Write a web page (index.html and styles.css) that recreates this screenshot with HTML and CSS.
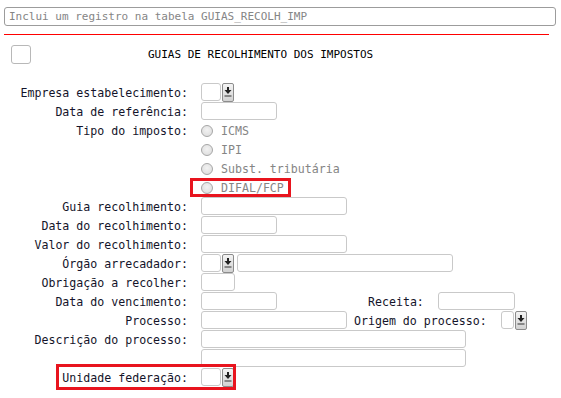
FILE: index.html
```html
<!DOCTYPE html>
<html>
<head>
<meta charset="utf-8">
<link rel="stylesheet" href="styles.css">
</head>
<body>
<div class="page">
  <div class="cmd"><span class="cmd-text">Inclui um registro na tabela GUIAS_RECOLH_IMP</span></div>
  <div class="rule"></div>
  <div class="head">
    <span class="check"></span>
    <span class="title">GUIAS DE RECOLHIMENTO DOS IMPOSTOS</span>
  </div>
  <div class="form">
    <div class="lbl">Empresa estabelecimento:</div>
    <div class="fld"><span class="inp w20"></span><span class="btn"><svg width="10" height="17" viewBox="0 0 10 17"><rect x="4" y="3" width="2" height="3" fill="#222"/><path d="M1.5 6 H8.5 L5 10 Z" fill="#222"/><rect x="1.5" y="11.5" width="7" height="1" fill="#333"/></svg></span></div>

    <div class="lbl">Data de referência:</div>
    <div class="fld"><span class="inp w76"></span></div>

    <div class="lbl">Tipo do imposto:</div>
    <div class="fld"><span class="opt"><span class="radio"></span><span class="opt-text">ICMS</span></span></div>

    <div class="lbl"></div>
    <div class="fld"><span class="opt"><span class="radio"></span><span class="opt-text">IPI</span></span></div>

    <div class="lbl"></div>
    <div class="fld"><span class="opt"><span class="radio"></span><span class="opt-text">Subst. tributária</span></span></div>

    <div class="lbl"></div>
    <div class="fld"><span class="opt hl"><span class="radio"></span><span class="opt-text">DIFAL/FCP</span></span></div>

    <div class="lbl">Guia recolhimento:</div>
    <div class="fld"><span class="inp w146"></span></div>

    <div class="lbl">Data do recolhimento:</div>
    <div class="fld"><span class="inp w76"></span></div>

    <div class="lbl">Valor do recolhimento:</div>
    <div class="fld"><span class="inp w146"></span></div>

    <div class="lbl">Órgão arrecadador:</div>
    <div class="fld"><span class="inp w20"></span><span class="btn"><svg width="10" height="17" viewBox="0 0 10 17"><rect x="4" y="3" width="2" height="3" fill="#222"/><path d="M1.5 6 H8.5 L5 10 Z" fill="#222"/><rect x="1.5" y="11.5" width="7" height="1" fill="#333"/></svg></span><span class="inp w216 ml3"></span></div>

    <div class="lbl">Obrigação a recolher:</div>
    <div class="fld"><span class="inp w34"></span></div>

    <div class="lbl">Data do vencimento:</div>
    <div class="fld"><span class="inp w76"></span><span class="lbl2 receita">Receita:</span><span class="inp w77"></span></div>

    <div class="lbl">Processo:</div>
    <div class="fld"><span class="inp w146"></span><span class="lbl2 origem">Origem do processo:</span><span class="inp w13"></span><span class="btn"><svg width="10" height="17" viewBox="0 0 10 17"><rect x="4" y="3" width="2" height="3" fill="#222"/><path d="M1.5 6 H8.5 L5 10 Z" fill="#222"/><rect x="1.5" y="11.5" width="7" height="1" fill="#333"/></svg></span></div>

    <div class="lbl">Descrição do processo:</div>
    <div class="fld"><span class="inp w265"></span></div>

    <div class="lbl"></div>
    <div class="fld"><span class="inp w265"></span></div>

    <div class="row-uf">
      <div class="lbl">Unidade federação:</div>
      <div class="fld"><span class="inp w20"></span><span class="btn"><svg width="10" height="17" viewBox="0 0 10 17"><rect x="4" y="3" width="2" height="3" fill="#222"/><path d="M1.5 6 H8.5 L5 10 Z" fill="#222"/><rect x="1.5" y="11.5" width="7" height="1" fill="#333"/></svg></span></div>
    </div>
  </div>
</div>
</body>
</html>
```

FILE: styles.css
```css
html, body {
  margin: 0;
  padding: 0;
  background: #ffffff;
}

body {
  font-family: "DejaVu Sans Mono", "Liberation Mono", monospace;
  color: #14142a;
}

.page {
  width: 561px;
  height: 398px;
  overflow: hidden;
}

.cmd {
  margin: 7px 5px 0 4px;
  height: 19px;
  box-sizing: border-box;
  border: 1px solid #9c9c9c;
  border-radius: 3px;
  display: flex;
  align-items: center;
  padding-left: 4px;
}

.cmd-text {
  font-size: 11px;
  color: #858585;
}

.rule {
  margin: 8px 0 0 4px;
  width: 545px;
  height: 1px;
  background: #ff0000;
}

.head {
  display: flex;
  align-items: center;
  margin-top: 10px;
  padding-left: 11px;
  height: 19px;
}

.check {
  width: 20px;
  height: 19px;
  box-sizing: border-box;
  border: 1px solid #b8b8b8;
  border-radius: 3px;
  background: #fff;
}

.title {
  margin-left: 117px;
  font-size: 11px;
  color: #000;
}

.form {
  margin-top: 19px;
  padding-left: 4px;
  display: grid;
  grid-template-columns: 184px auto;
  column-gap: 13px;
  grid-auto-rows: 19px;
  font-size: 11.6px;
}

.lbl {
  text-align: right;
  align-self: center;
  white-space: nowrap;
  color: #14142a;
  line-height: 14px;
}

.fld {
  display: flex;
  align-items: flex-start;
}

.inp {
  display: block;
  height: 18px;
  box-sizing: border-box;
  border: 1px solid #c9c9c9;
  border-radius: 3px;
  background: #fff;
}

.w13 { width: 13px; }
.w20 { width: 20px; }
.w34 { width: 34px; }
.w76 { width: 76px; }
.w77 { width: 77px; }
.w146 { width: 146px; }
.w216 { width: 216px; }
.w265 { width: 265px; }
.ml3 { margin-left: 3px; }

.btn {
  display: flex;
  justify-content: center;
  width: 12px;
  height: 19px;
  margin-left: 1px;
  box-sizing: border-box;
  border: 1px solid #8c8c8c;
  border-radius: 2px;
  background: linear-gradient(#f4f4f4, #d2d2d2);
}

.lbl2 {
  align-self: center;
  white-space: nowrap;
  line-height: 14px;
  color: #14142a;
}

.receita {
  margin-left: 91px;
  margin-right: 14px;
}

.origem {
  margin-left: 7px;
  margin-right: 14px;
}

.opt {
  display: inline-flex;
  align-items: center;
  height: 19px;
}

.radio {
  width: 12px;
  height: 12px;
  box-sizing: border-box;
  border: 1px solid #a6a6a6;
  border-radius: 50%;
  background: radial-gradient(circle at 50% 40%, #f2f2f2, #dadada);
}

.opt-text {
  margin-left: 8px;
  color: #858585;
  line-height: 14px;
}

.hl {
  height: 13px;
  margin-top: 3px;
  margin-left: -8px;
  padding: 0 4px 0 8px;
  outline: 3px solid #e8141e;
}

.row-uf {
  grid-column: 1 / -1;
  display: grid;
  grid-template-columns: 184px auto;
  column-gap: 13px;
  position: relative;
}

.row-uf::before {
  content: "";
  position: absolute;
  left: 52px;
  top: -4px;
  width: 180px;
  height: 26px;
  box-sizing: border-box;
  border: 3px solid #e8141e;
}
```
